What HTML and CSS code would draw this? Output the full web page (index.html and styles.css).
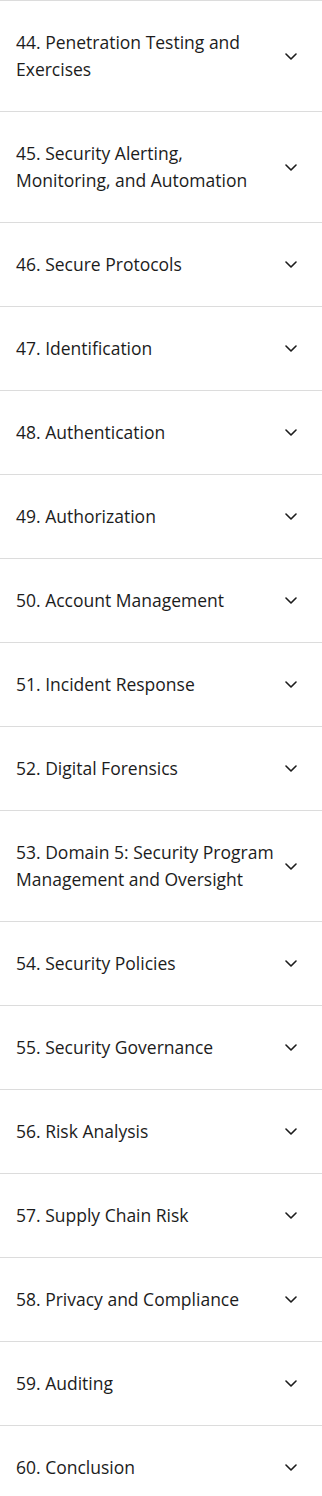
FILE: index.html
```html
<!DOCTYPE html>
<html lang="en">
<head>
    <meta charset="UTF-8">
    <title>Course outline</title>
    <link rel="stylesheet" href="styles.css">
</head>
<body>
<ul class="outline">
    <li class="item"><span class="title">44. Penetration Testing and Exercises</span><svg class="chev" viewBox="0 0 12 7"><polyline points="1,1 6,6 11,1"/></svg></li>
    <li class="item"><span class="title">45. Security Alerting, Monitoring, and Automation</span><svg class="chev" viewBox="0 0 12 7"><polyline points="1,1 6,6 11,1"/></svg></li>
    <li class="item"><span class="title">46. Secure Protocols</span><svg class="chev" viewBox="0 0 12 7"><polyline points="1,1 6,6 11,1"/></svg></li>
    <li class="item"><span class="title">47. Identification</span><svg class="chev" viewBox="0 0 12 7"><polyline points="1,1 6,6 11,1"/></svg></li>
    <li class="item"><span class="title">48. Authentication</span><svg class="chev" viewBox="0 0 12 7"><polyline points="1,1 6,6 11,1"/></svg></li>
    <li class="item"><span class="title">49. Authorization</span><svg class="chev" viewBox="0 0 12 7"><polyline points="1,1 6,6 11,1"/></svg></li>
    <li class="item"><span class="title">50. Account Management</span><svg class="chev" viewBox="0 0 12 7"><polyline points="1,1 6,6 11,1"/></svg></li>
    <li class="item"><span class="title">51. Incident Response</span><svg class="chev" viewBox="0 0 12 7"><polyline points="1,1 6,6 11,1"/></svg></li>
    <li class="item"><span class="title">52. Digital Forensics</span><svg class="chev" viewBox="0 0 12 7"><polyline points="1,1 6,6 11,1"/></svg></li>
    <li class="item"><span class="title">53. Domain 5: Security Program Management and Oversight</span><svg class="chev" viewBox="0 0 12 7"><polyline points="1,1 6,6 11,1"/></svg></li>
    <li class="item"><span class="title">54. Security Policies</span><svg class="chev" viewBox="0 0 12 7"><polyline points="1,1 6,6 11,1"/></svg></li>
    <li class="item"><span class="title">55. Security Governance</span><svg class="chev" viewBox="0 0 12 7"><polyline points="1,1 6,6 11,1"/></svg></li>
    <li class="item"><span class="title">56. Risk Analysis</span><svg class="chev" viewBox="0 0 12 7"><polyline points="1,1 6,6 11,1"/></svg></li>
    <li class="item"><span class="title">57. Supply Chain Risk</span><svg class="chev" viewBox="0 0 12 7"><polyline points="1,1 6,6 11,1"/></svg></li>
    <li class="item"><span class="title">58. Privacy and Compliance</span><svg class="chev" viewBox="0 0 12 7"><polyline points="1,1 6,6 11,1"/></svg></li>
    <li class="item"><span class="title">59. Auditing</span><svg class="chev" viewBox="0 0 12 7"><polyline points="1,1 6,6 11,1"/></svg></li>
    <li class="item"><span class="title">60. Conclusion</span><svg class="chev" viewBox="0 0 12 7"><polyline points="1,1 6,6 11,1"/></svg></li>
</ul>
</body>
</html>
```
FILE: styles.css
```css
*{
    margin: 0;
    padding: 0;
    box-sizing: border-box;
}
body{
    background: #fff;
    font-family: "Open Sans", "Noto Sans", sans-serif;
    color: #1c1c1c;
}
.outline{
    list-style: none;
}
.item{
    display: flex;
    align-items: center;
    justify-content: space-between;
    gap: 8px;
    padding: 28px 25px 28px 16px;
    border-top: 1px solid #dcdcdc;
}
.title{
    font-size: 17.5px;
    line-height: 27px;
    max-width: 266px;
}
.chev{
    width: 12px;
    height: 7px;
    flex: none;
    fill: none;
    stroke: #1c1c1c;
    stroke-width: 1.6;
    stroke-linecap: round;
    stroke-linejoin: round;
}
```
